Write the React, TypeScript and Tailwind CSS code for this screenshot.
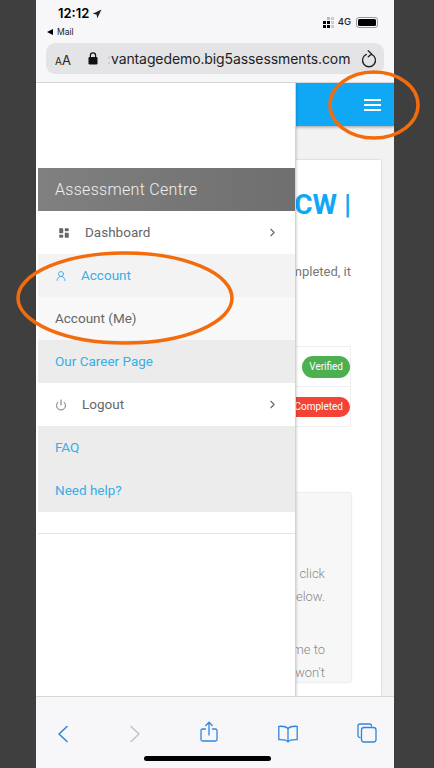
import { ChevronRight, LayoutDashboard, Power, UserRound } from 'lucide-react';

const roboto = "font-['Roboto',sans-serif]";

function LockIcon() {
    return (
        <svg width="10" height="13" viewBox="0 0 10 13" fill="none">
            <rect x="0.5" y="5" width="9" height="7.5" rx="1.2" fill="#111" />
            <path d="M2.4 5.5V3.4a2.6 2.6 0 0 1 5.2 0v2.1" stroke="#111" strokeWidth="1.2" />
        </svg>
    );
}

function ReloadIcon() {
    return (
        <svg width="16" height="18" viewBox="0 0 16 18" fill="none" stroke="#222" strokeWidth="1.3" strokeLinecap="round" strokeLinejoin="round">
            <path d="M5.4 4.3A6.5 6.5 0 1 0 10.6 4.3" />
            <path d="M6.2 0.8 9.6 3.9 6.3 6.8" transform="translate(1 0)" />
        </svg>
    );
}

function Toolbar() {
    return (
        <div className="flex h-[72px] shrink-0 flex-col border-t border-[#d8d8d8] bg-[#f7f6f8]">
            <div className="flex h-[46px] items-end justify-between pl-[20px] pr-[17px]">
                <svg width="14" height="18" viewBox="0 0 14 18" fill="none" stroke="#2f86e0" strokeWidth="1.6" strokeLinecap="round" strokeLinejoin="round">
                    <path d="M11 1.5 3 9l8 7.5" />
                </svg>
                <svg className="ml-[53px]" width="14" height="18" viewBox="0 0 14 18" fill="none" stroke="#c4c4c6" strokeWidth="1.6" strokeLinecap="round" strokeLinejoin="round">
                    <path d="M3 1.5 11 9l-8 7.5" />
                </svg>
                <svg className="ml-[54px]" width="18" height="22" viewBox="0 0 18 22" fill="none" stroke="#2f86e0" strokeWidth="1.3" strokeLinecap="round" strokeLinejoin="round">
                    <path d="M5.5 8H2.5a1.5 1.5 0 0 0-1.5 1.5v9A1.5 1.5 0 0 0 2.5 20h13a1.5 1.5 0 0 0 1.5-1.5v-9A1.5 1.5 0 0 0 15.500 8h-3" />
                    <path d="M9 14V1.500M5.800 4.500 9 1.300l3.200 3.200" />
                </svg>
                <svg className="ml-[54px]" width="22" height="18" viewBox="0 0 22 18" fill="none" stroke="#2f86e0" strokeWidth="1.3" strokeLinecap="round" strokeLinejoin="round">
                    <path d="M11 3.500C9.500 1.800 6.500 1 1.800 1.300v13.400c4.500-.3 7.500.4 9.200 2.100 1.700-1.700 4.700-2.400 9.200-2.100V1.300C15.500 1 12.500 1.800 11 3.500Z" />
                    <path d="M11 3.500v13.300" />
                </svg>
                <svg className="ml-[54px]" width="20" height="20" viewBox="0 0 20 20" fill="none" stroke="#2f86e0" strokeWidth="1.3" strokeLinejoin="round">
                    <path d="M3.500 14.500H3A2 2 0 0 1 1 12.500V3a2 2 0 0 1 2-2h9.500a2 2 0 0 1 2 2v.5" />
                    <rect x="4.500" y="4.500" width="14.500" height="14.500" rx="2.500" />
                </svg>
            </div>
            <div className="flex flex-1 items-start justify-center pt-[13px]">
                <div className="ml-[-16px] h-[5px] w-[127px] rounded-full bg-black" />
            </div>
        </div>
    );
}

function BrowserHeader() {
    return (
        <div className="h-[83px] shrink-0 border-b border-[#d6d6d6] bg-[#f7f6f8] font-['Inter',sans-serif]">
            <div className="flex h-[43px] justify-between pl-[11px] pr-[16px]">
                <div className="flex flex-col">
                    <div className="flex h-[27px] items-center gap-[3px] pl-[11px] pt-[1px] text-[13px] font-semibold text-black">
                        12:12
                        <svg width="10" height="10" viewBox="0 0 10 10" fill="#222">
                            <path d="M9.500.5 5.300 9.300 4.500 5.500.7 4.700Z" />
                        </svg>
                    </div>
                    <div className="flex items-center gap-[4px] text-[8.500px] leading-[10px] text-[#222]">
                        <span className="h-0 w-0 border-y-[3.500px] border-r-[6px] border-y-transparent border-r-black" />
                        Mail
                    </div>
                </div>
                <div className="flex items-center gap-[4px] pt-[2px]">
                    <div className="grid grid-cols-3 gap-[1px]">
                        <span className="h-[3px] w-[3px] bg-transparent" />
                        <span className="h-[3px] w-[3px] bg-[#bbb]" />
                        <span className="h-[3px] w-[3px] bg-[#ccc]" />
                        <span className="h-[3px] w-[3px] bg-black" />
                        <span className="h-[3px] w-[3px] bg-black" />
                        <span className="h-[3px] w-[3px] bg-[#ccc]" />
                        <span className="h-[3px] w-[3px] bg-black" />
                        <span className="h-[3px] w-[3px] bg-black" />
                        <span className="h-[3px] w-[3px] bg-[#ccc]" />
                    </div>
                    <span className="text-[9.500px] font-medium text-[#222]">4G</span>
                    <div className="ml-[1px] flex h-[11px] w-[22px] items-center rounded-[3px] border border-[#999] p-[1px]">
                        <div className="h-full w-full rounded-[1.500px] bg-black" />
                    </div>
                </div>
            </div>
            <div className="mx-[10px] flex h-[31px] items-center rounded-[9px] bg-[#e4e4e6] pl-[9px] pr-[7px]">
                <span className="w-[33px] text-[#222]">
                    <span className="text-[10px]">A</span>
                    <span className="text-[13px]">A</span>
                </span>
                <LockIcon />
                <span className="ml-[9px] whitespace-nowrap text-[14px] tracking-[-0.1px] text-[#222]">
                    <span className="text-[#bbb]">:</span>vantagedemo.big5assessments.com
                </span>
                <span className="ml-auto">
                    <ReloadIcon />
                </span>
            </div>
        </div>
    );
}

function PageBehind() {
    return (
        <div className={`absolute inset-0 flex flex-col bg-[#f3f2f3] ${roboto}`}>
            <div className="flex h-[43px] shrink-0 items-center justify-end bg-[#10a8f5] pr-[13px] shadow-[0_1px_3px_rgba(0,0,0,0.35)]">
                <div className="flex w-[17px] flex-col gap-[3px]">
                    <span className="h-[2px] bg-white" />
                    <span className="h-[2px] bg-white" />
                    <span className="h-[2px] bg-white" />
                </div>
            </div>
            <div className="ml-[12px] mr-[13px] mt-[34px] flex-1 bg-white pr-[30px] shadow-[0_0_2px_rgba(0,0,0,0.2)]">
                <div className="mt-[28px] text-right text-[28px] font-bold leading-[34px] text-[#10a8f5]">PCW |</div>
                <div className="mt-[40px] text-right text-[13px] leading-[20px] text-[#777]">completed, it</div>
                <div className="mt-[64px] w-full border border-[#efefef] text-[10px] text-white">
                    <div className="flex h-[40px] items-center justify-end border-b border-[#efefef]">
                        <span className="rounded-full bg-[#4caf50] px-[7px] py-[4px] leading-[14px]">Verified</span>
                    </div>
                    <div className="flex h-[39px] items-center justify-end">
                        <span className="rounded-full bg-[#f44336] px-[7px] py-[3px] leading-[14px]">Not Completed</span>
                    </div>
                </div>
                <div className="mt-[66px] h-[189px] bg-[#f8f7f8] pr-[26px] pt-[69px] text-right text-[13px] font-light leading-[23px] text-[#888] shadow-[0_0_2px_rgba(0,0,0,0.2)]">
                    <div>click</div>
                    <div>below.</div>
                    <div className="mt-[30px]">me to</div>
                    <div>won't</div>
                </div>
            </div>
        </div>
    );
}

function Drawer() {
    return (
        <div className={`absolute inset-y-0 left-0 w-[260px] border-r border-[#d4d4d4] bg-white pl-[2px] text-[13.500px] shadow-[1px_0_2px_rgba(0,0,0,0.15)] ${roboto}`}>
            <div className="h-[85px]" />
            <div className="flex h-[43px] items-center bg-gradient-to-r from-[#808080] to-[#6f6f6f] pl-[17px] text-[16px] font-light tracking-[0.3px] text-[#f0f0f0]">
                Assessment Centre
            </div>
            <div className="flex h-[43px] items-center pl-[20px] pr-[16px] text-[#666]">
                <LayoutDashboard size={12} fill="#666" strokeWidth={1} />
                <span className="ml-[15px]">Dashboard</span>
                <ChevronRight className="ml-auto" size={13} strokeWidth={2} />
            </div>
            <div className="flex h-[43px] items-center bg-[#f4f3f4] pl-[17px] text-[#38ade6]">
                <UserRound size={12} strokeWidth={1.8} />
                <span className="ml-[14px]">Account</span>
            </div>
            <div className="flex h-[43px] items-center bg-[#f9f8f9] pl-[17px] text-[#666]">Account (Me)</div>
            <div className="flex h-[43px] items-center bg-[#ececec] pl-[17px] text-[#38ade6]">Our Career Page</div>
            <div className="flex h-[43px] items-center pl-[17px] pr-[16px] text-[#666]">
                <Power size={12} strokeWidth={1.8} />
                <span className="ml-[15px]">Logout</span>
                <ChevronRight className="ml-auto" size={13} strokeWidth={2} />
            </div>
            <div className="flex h-[86px] flex-col bg-[#ececec] pl-[17px] text-[#38ade6]">
                <div className="flex h-[43px] items-center">FAQ</div>
                <div className="flex h-[43px] items-center">Need help?</div>
            </div>
            <div className="mt-[21px] border-t border-[#e4e4e4]" />
        </div>
    );
}

export default function App() {
    return (
        <div className="relative flex h-[768px] w-[434px] overflow-hidden bg-[#3f3f3f]">
            <div className="ml-[36px] flex h-full w-[358px] flex-col bg-white">
                <BrowserHeader />
                <div className="relative flex-1 overflow-hidden">
                    <PageBehind />
                    <Drawer />
                </div>
                <Toolbar />
            </div>
            {/* orange marker rings drawn on top of the screenshot */}
            <svg className="absolute left-0 top-0" width="434" height="768" fill="none" stroke="#f26c0d" strokeWidth="3.500">
                <ellipse cx="374" cy="105" rx="44" ry="33" />
                <ellipse cx="125" cy="298" rx="107" ry="45" />
            </svg>
        </div>
    );
}
